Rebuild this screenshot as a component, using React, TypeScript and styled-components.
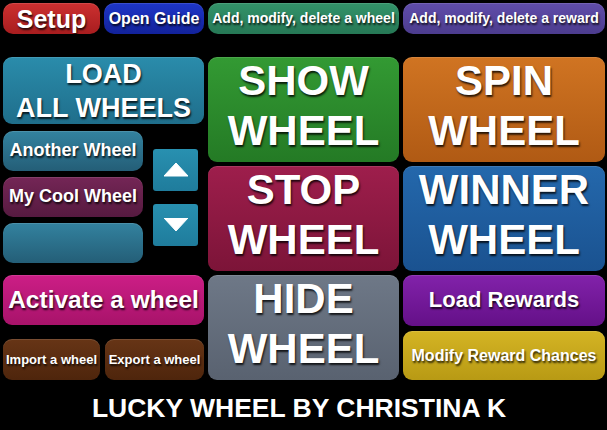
import React from "react";
import styled, { createGlobalStyle } from "styled-components";

const GlobalStyle = createGlobalStyle`
  html, body {
    margin: 0;
    padding: 0;
    background: #000;
  }
  body {
    font-family: "Liberation Sans", Arial, sans-serif;
  }
`;

const Page = styled.div`
  width: 607px;
  height: 430px;
  box-sizing: border-box;
  padding: 3px 2px 0 3px;
  background: #000;
  overflow: hidden;
`;

const TopBar = styled.div`
  display: grid;
  grid-template-columns: 97px 100px 191px 202px;
  column-gap: 4px;
  height: 31px;
`;

const Main = styled.div`
  display: grid;
  grid-template-columns: 201px 191px 202px;
  grid-template-rows: 105px 105px 105px;
  gap: 4px;
  margin-top: 23px;
`;

const Button = styled.div<{
  $top: string;
  $bottom: string;
  $size: number;
  $radius?: number;
  $height?: number;
}>`
  display: flex;
  align-items: center;
  justify-content: center;
  text-align: center;
  box-sizing: border-box;
  min-height: 0;
  height: ${(p) => (p.$height ? `${p.$height}px` : "auto")};
  border-radius: ${(p) => p.$radius ?? 9}px;
  background: linear-gradient(to bottom, ${(p) => p.$top}, ${(p) => p.$bottom});
  box-shadow: inset 0 1px 0 rgba(255, 255, 255, 0.12);
  color: #fff;
  font-weight: 700;
  font-size: ${(p) => p.$size}px;
  line-height: 1.2;
  white-space: nowrap;
  text-shadow: 1px 2px 2px rgba(0, 0, 0, 0.8);
  cursor: pointer;
`;

const BigButton = styled(Button)`
  line-height: 50px;
  padding-bottom: 7px;
  flex-direction: column;
`;

const LeftTop = styled.div`
  grid-column: 1;
  grid-row: 1 / 3;
  display: flex;
  flex-direction: column;
`;

const LoadButton = styled(Button)`
  line-height: 34px;
  flex-direction: column;
`;

const WheelList = styled.div`
  display: grid;
  grid-template-columns: 140px 45px;
  column-gap: 10px;
  margin-top: 7px;
`;

const ListItems = styled.div`
  display: grid;
  grid-template-rows: 40px 40px 40px;
  row-gap: 6px;
`;

const ArrowColumn = styled.div`
  display: flex;
  flex-direction: column;
  justify-content: center;
  gap: 13px;
`;

const ArrowButton = styled.div`
  height: 42px;
  display: flex;
  align-items: center;
  justify-content: center;
  border-radius: 3px;
  background: linear-gradient(to bottom, #2890b0, #1f7c9c);
  cursor: pointer;
`;

const Stack = styled.div<{ $gap: number }>`
  display: flex;
  flex-direction: column;
  gap: ${(p) => p.$gap}px;
`;

const Pair = styled.div`
  display: grid;
  grid-template-columns: 97px 99px;
  column-gap: 5px;
  height: 41px;
`;

const Footer = styled.div`
  margin-top: 13px;
  text-align: center;
  color: #fff;
  font-weight: 700;
  font-size: 26.5px;
  line-height: 30px;
  padding-right: 10px;
`;

const Arrow = ({ down }: { down?: boolean }) => (
  <svg width="24" height="14" viewBox="0 0 24 14">
    <polygon
      points={down ? "0,0 24,0 12,13" : "12,0 24,13 0,13"}
      fill="#fff"
      stroke="#fff"
      strokeWidth="1"
      strokeLinejoin="round"
    />
  </svg>
);

export default function App() {
  return (
    <>
      <GlobalStyle />
      <Page>
        <TopBar>
          <Button $top="#cc3030" $bottom="#a81d1f" $size={25} $radius={10}>
            Setup
          </Button>
          <Button $top="#1e36c8" $bottom="#12229a" $size={16} $radius={10}>
            Open Guide
          </Button>
          <Button $top="#33936a" $bottom="#267855" $size={14} $radius={10}>
            Add, modify, delete a wheel
          </Button>
          <Button $top="#604daa" $bottom="#4c3c8e" $size={14} $radius={10}>
            Add, modify, delete a reward
          </Button>
        </TopBar>

        <Main>
          <LeftTop>
            <LoadButton $top="#2a8cab" $bottom="#1f6e8b" $size={27} $height={67}>
              <span>LOAD</span>
              <span>ALL WHEELS</span>
            </LoadButton>
            <WheelList>
              <ListItems>
                <Button $top="#33829f" $bottom="#245e77" $size={18} $radius={10}>
                  Another Wheel
                </Button>
                <Button $top="#742656" $bottom="#561a40" $size={18} $radius={10}>
                  My Cool Wheel
                </Button>
                <Button $top="#33829f" $bottom="#245e77" $size={18} $radius={10} />
              </ListItems>
              <ArrowColumn>
                <ArrowButton>
                  <Arrow />
                </ArrowButton>
                <ArrowButton>
                  <Arrow down />
                </ArrowButton>
              </ArrowColumn>
            </WheelList>
          </LeftTop>

          <BigButton $top="#339a33" $bottom="#247a25" $size={42}>
            <span>SHOW</span>
            <span>WHEEL</span>
          </BigButton>
          <BigButton $top="#d07422" $bottom="#b05a14" $size={42}>
            <span>SPIN</span>
            <span>WHEEL</span>
          </BigButton>
          <BigButton $top="#9e1e4c" $bottom="#7c1438" $size={42}>
            <span>STOP</span>
            <span>WHEEL</span>
          </BigButton>
          <BigButton $top="#2468ac" $bottom="#1a5290" $size={42}>
            <span>WINNER</span>
            <span>WHEEL</span>
          </BigButton>

          <Stack $gap={14}>
            <Button $top="#cc1e86" $bottom="#a8136a" $size={24.5} $height={50}>
              Activate a wheel
            </Button>
            <Pair>
              <Button $top="#673516" $bottom="#4e250c" $size={13}>
                Import a wheel
              </Button>
              <Button $top="#673516" $bottom="#4e250c" $size={13}>
                Export a wheel
              </Button>
            </Pair>
          </Stack>
          <BigButton $top="#6e7887" $bottom="#596270" $size={42}>
            <span>HIDE</span>
            <span>WHEEL</span>
          </BigButton>
          <Stack $gap={5}>
            <Button $top="#8222aa" $bottom="#641088" $size={22} $height={51}>
              Load Rewards
            </Button>
            <Button $top="#d4b424" $bottom="#b89a14" $size={16} $height={49}>
              Modify Reward Chances
            </Button>
          </Stack>
        </Main>

        <Footer>LUCKY WHEEL BY CHRISTINA K</Footer>
      </Page>
    </>
  );
}
